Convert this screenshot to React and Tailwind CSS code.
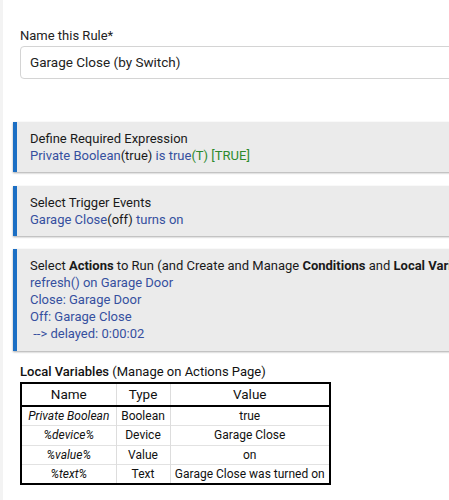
import React from "react";

const F = { fontFamily: "Roboto, 'Liberation Sans', sans-serif" };

function Box({ children, className = "" }) {
  return (
    <div
      className={`ml-[13px] w-[600px] border-l-4 border-[#1c6fc4] bg-[#ebebeb] pl-[13px] text-[13px] leading-[17px] text-[#1a1a1a] whitespace-nowrap shadow-[0_1px_2px_rgba(0,0,0,0.35)] ${className}`}
    >
      {children}
    </div>
  );
}

const B = ({ children }) => <span className="text-[#36509f]">{children}</span>;
const G = ({ children }) => <span className="text-[#2d8a2d]">{children}</span>;

export default function App() {
  const rows = [
    ["Private Boolean", "Boolean", "true"],
    ["%device%", "Device", "Garage Close"],
    ["%value%", "Value", "on"],
    ["%text%", "Text", "Garage Close was turned on"],
  ];
  return (
    <div style={F} className="relative h-[500px] w-[449px] overflow-hidden bg-white">
      <div className="absolute left-0 top-0 h-full w-[3px] bg-[#f3f3f3]" />
      <div className="pl-[20px] pt-[27px]">
        <div className="text-[13px] leading-[17px] text-[#222]">Name this Rule*</div>
        <div className="mt-[2px] flex h-[33px] w-[500px] items-center rounded-[4px] border border-[#d4d4d4] pl-[9px] text-[13.5px] text-[#222]">
          Garage Close (by Switch)
        </div>
      </div>

      <Box className="mt-[43px] py-[8px]">
        <div>Define Required Expression</div>
        <div>
          <B>Private Boolean</B>(true) <B>is true</B>
          <G>(T) [TRUE]</G>
        </div>
      </Box>

      <Box className="mt-[14px] py-[8px]">
        <div>Select Trigger Events</div>
        <div>
          <B>Garage Close</B>(off) <B>turns on</B>
        </div>
      </Box>

      <Box className="mt-[13px] pb-[9px] pt-[8px]">
        <div>
          Select <b>Actions</b> to Run (and Create and Manage <b>Conditions</b> and{" "}
          <b>Local Variables</b>)
        </div>
        <div className="text-[#36509f]">refresh() on Garage Door</div>
        <div className="text-[#36509f]">Close: Garage Door</div>
        <div className="text-[#36509f]">Off: Garage Close</div>
        <div className="text-[#36509f]">&nbsp;--&gt; delayed: 0:00:02</div>
      </Box>

      <div className="pl-[20px] pt-[12px]">
        <div className="text-[13px] leading-[17px] text-[#111]">
          <b className="font-medium">Local Variables</b> (Manage on Actions Page)
        </div>
        <table className="mt-[2px] w-[311px] border-collapse border-2 border-black text-center text-[12px] text-[#111]">
          <thead>
            <tr className="h-[23px] border-b-2 border-black text-[13.5px]">
              <th className="w-[95px] border-r border-[#ddd] font-normal">Name</th>
              <th className="w-[54px] border-r border-[#ddd] font-normal">Type</th>
              <th className="font-normal">Value</th>
            </tr>
          </thead>
          <tbody>
            {rows.map((r, i) => (
              <tr key={i} className={`h-[19.5px] ${i < 3 ? "border-b border-[#e2e2e2]" : ""}`}>
                <td className="border-r border-[#ddd] p-0 italic">{r[0]}</td>
                <td className="border-r border-[#ddd] p-0">{r[1]}</td>
                <td className="p-0">{r[2]}</td>
              </tr>
            ))}
          </tbody>
        </table>
      </div>
    </div>
  );
}
